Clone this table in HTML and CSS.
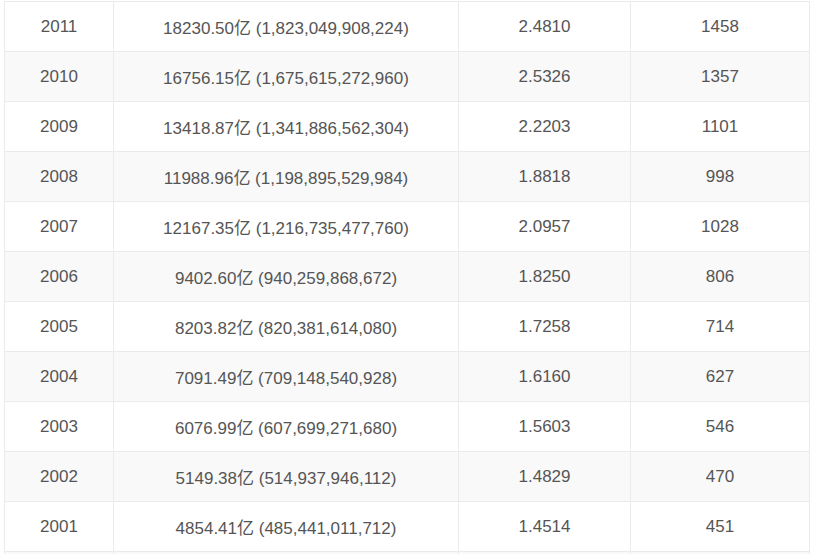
FILE: index.html
```html
<!DOCTYPE html>
<html lang="zh-CN">
<head>
<meta charset="utf-8">
<title>GDP</title>
<link rel="stylesheet" href="styles.css">
</head>
<body>
<div class="wrap">
<table class="data">
<colgroup><col class="c1"><col class="c2"><col class="c3"><col class="c4"></colgroup>
<tbody>
<tr><td>2011</td><td>18230.50亿 (1,823,049,908,224)</td><td>2.4810</td><td>1458</td></tr>
<tr><td>2010</td><td>16756.15亿 (1,675,615,272,960)</td><td>2.5326</td><td>1357</td></tr>
<tr><td>2009</td><td>13418.87亿 (1,341,886,562,304)</td><td>2.2203</td><td>1101</td></tr>
<tr><td>2008</td><td>11988.96亿 (1,198,895,529,984)</td><td>1.8818</td><td>998</td></tr>
<tr><td>2007</td><td>12167.35亿 (1,216,735,477,760)</td><td>2.0957</td><td>1028</td></tr>
<tr><td>2006</td><td>9402.60亿 (940,259,868,672)</td><td>1.8250</td><td>806</td></tr>
<tr><td>2005</td><td>8203.82亿 (820,381,614,080)</td><td>1.7258</td><td>714</td></tr>
<tr><td>2004</td><td>7091.49亿 (709,148,540,928)</td><td>1.6160</td><td>627</td></tr>
<tr><td>2003</td><td>6076.99亿 (607,699,271,680)</td><td>1.5603</td><td>546</td></tr>
<tr><td>2002</td><td>5149.38亿 (514,937,946,112)</td><td>1.4829</td><td>470</td></tr>
<tr><td>2001</td><td>4854.41亿 (485,441,011,712)</td><td>1.4514</td><td>451</td></tr>
<tr><td>&nbsp;</td><td>&nbsp;</td><td>&nbsp;</td><td>&nbsp;</td></tr>
</tbody>
</table>
</div>
</body>
</html>
```

FILE: styles.css
```css
html, body {
  margin: 0;
  padding: 0;
  background: #fff;
}
.wrap {
  padding: 1px 0 0 4px;
}
.data {
  border-collapse: collapse;
  table-layout: fixed;
  width: 805px;
  font-family: "Liberation Sans", Arial, "Noto Sans CJK SC", sans-serif;
  font-size: 17px;
  color: #555;
}
.c1 { width: 109px; }
.c2 { width: 345px; }
.c3 { width: 172px; }
.c4 { width: 179px; }
.data td {
  border: 1px solid #ebebeb;
  height: 50px;
  padding: 0 8px;
  box-sizing: border-box;
  text-align: center;
  vertical-align: middle;
  white-space: nowrap;
}
.data tr:nth-child(even) td {
  background: #f9f9f9;
}
```
